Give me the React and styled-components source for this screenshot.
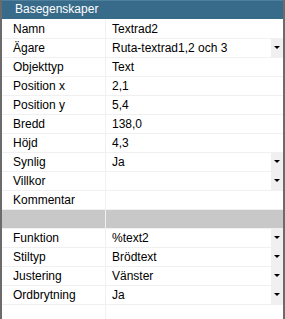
import styled, { createGlobalStyle } from "styled-components";

const GlobalStyle = createGlobalStyle`
  html, body {
    margin: 0;
    padding: 0;
    background: #ffffff;
  }
  body {
    font-family: "Segoe UI", "Liberation Sans", Arial, sans-serif;
    font-size: 12px;
  }
`;

const properties = [
  { label: "Namn", value: "Textrad2" },
  { label: "Ägare", value: "Ruta-textrad1,2 och 3", dropdown: true },
  { label: "Objekttyp", value: "Text" },
  { label: "Position x", value: "2,1" },
  { label: "Position y", value: "5,4" },
  { label: "Bredd", value: "138,0" },
  { label: "Höjd", value: "4,3" },
  { label: "Synlig", value: "Ja", dropdown: true },
  { label: "Villkor", value: "", dropdown: true },
  { label: "Kommentar", value: "" },
  { separator: true },
  { label: "Funktion", value: "%text2", dropdown: true },
  { label: "Stiltyp", value: "Brödtext", dropdown: true },
  { label: "Justering", value: "Vänster", dropdown: true },
  { label: "Ordbrytning", value: "Ja", dropdown: true },
];

function App() {
  return (
    <>
      <GlobalStyle />
      <Panel>
        <Header>Basegenskaper</Header>
        <Grid>
          {properties.map((item, index) => {
            if (item.separator) {
              return (
                <Row key={index} $separator>
                  <LabelCell />
                  <ValueCell />
                </Row>
              );
            }
            return (
              <Row key={index}>
                <LabelCell>{item.label}</LabelCell>
                <ValueCell>
                  <span>{item.value}</span>
                  {item.dropdown && (
                    <DropButton>
                      <Arrow />
                    </DropButton>
                  )}
                </ValueCell>
              </Row>
            );
          })}
          <Filler>
            <LabelCell />
            <ValueCell />
          </Filler>
        </Grid>
      </Panel>
    </>
  );
}

export default App;

const Panel = styled.div`
  width: 285px;
  height: 319px;
  box-sizing: border-box;
  border-left: 2px solid #6b6b6b;
  border-right: 2px solid #6b6b6b;
  display: flex;
  flex-direction: column;
  background: #ffffff;
  overflow: hidden;
`;

const Header = styled.div`
  height: 20px;
  flex: none;
  background: #386a8a;
  color: #ffffff;
  padding-left: 13px;
  line-height: 17px;
  font-size: 12px;
  border-top: 1px solid #4f7f9c;
  border-bottom: 1px solid #ffffff;
  box-sizing: border-box;
`;

const Grid = styled.div`
  flex: 1;
  display: flex;
  flex-direction: column;
`;

const Row = styled.div`
  height: 19px;
  flex: none;
  display: grid;
  grid-template-columns: 104px 1fr;
  box-sizing: border-box;
  border-bottom: 1px solid #f0f0f0;
  background: ${(p) => (p.$separator ? "#c8c8c8" : "#ffffff")};
  color: #000000;
  line-height: 18px;
`;

const Filler = styled.div`
  flex: 1;
  display: grid;
  grid-template-columns: 104px 1fr;
`;

const LabelCell = styled.div`
  padding-left: 11px;
  border-right: 1px solid #f0f0f0;
  white-space: nowrap;
  overflow: hidden;
`;

const ValueCell = styled.div`
  padding-left: 6px;
  display: flex;
  justify-content: space-between;
  white-space: nowrap;
  overflow: hidden;
`;

const DropButton = styled.div`
  width: 12px;
  height: 18px;
  background: #f0f0f0;
  display: flex;
  justify-content: center;
  padding-top: 7px;
  box-sizing: border-box;
`;

const Arrow = styled.div`
  width: 0;
  height: 0;
  border-left: 3px solid transparent;
  border-right: 3px solid transparent;
  border-top: 3px solid #000000;
`;
